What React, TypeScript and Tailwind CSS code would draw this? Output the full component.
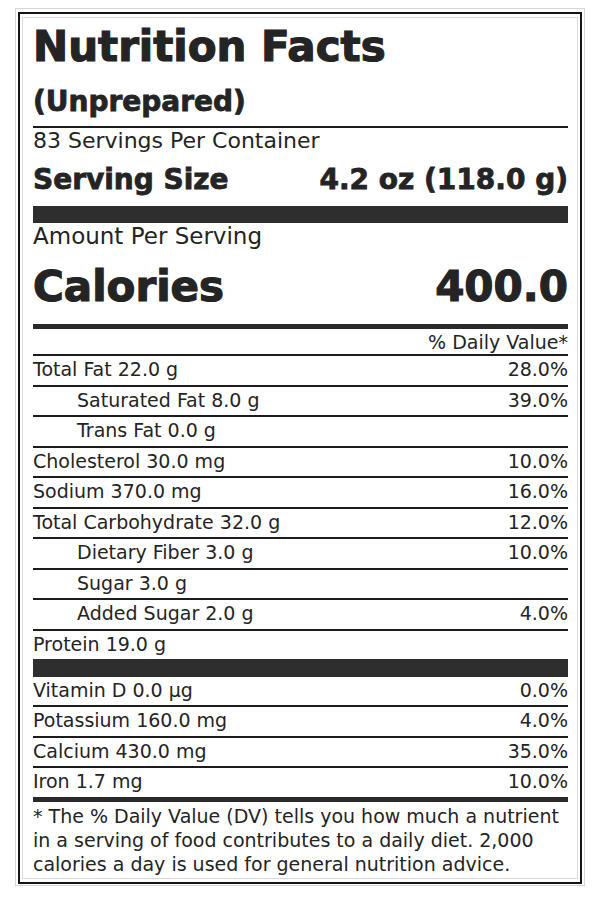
type Row = { label: string; dv?: string; indent?: boolean };

const nutrients: Row[] = [
  { label: 'Total Fat 22.0 g', dv: '28.0%' },
  { label: 'Saturated Fat 8.0 g', dv: '39.0%', indent: true },
  { label: 'Trans Fat 0.0 g', indent: true },
  { label: 'Cholesterol 30.0 mg', dv: '10.0%' },
  { label: 'Sodium 370.0 mg', dv: '16.0%' },
  { label: 'Total Carbohydrate 32.0 g', dv: '12.0%' },
  { label: 'Dietary Fiber 3.0 g', dv: '10.0%', indent: true },
  { label: 'Sugar 3.0 g', indent: true },
  { label: 'Added Sugar 2.0 g', dv: '4.0%', indent: true },
];

const vitamins: Row[] = [
  { label: 'Vitamin D 0.0 µg', dv: '0.0%' },
  { label: 'Potassium 160.0 mg', dv: '4.0%' },
  { label: 'Calcium 430.0 mg', dv: '35.0%' },
  { label: 'Iron 1.7 mg', dv: '10.0%' },
];

function NutrientRow({ row, border }: { row: Row; border: boolean }) {
  return (
    <div
      className={`flex justify-between h-[28.5px] box-content text-[19px] leading-[26px] ${
        border ? 'border-b-2 border-[#1c1c1c]' : ''
      }`}
    >
      <span className={row.indent ? 'pl-[44px]' : ''}>{row.label}</span>
      <span>{row.dv}</span>
    </div>
  );
}

export default function App() {
  return (
    <div className="min-h-[900px] bg-white pl-[15px] pt-[8px] font-['DejaVu_Sans',sans-serif] text-[#242424]">
      <div className="w-[570px] border border-[#d6d6d6] pt-[3px] pl-[2px] pr-[1px] pb-[1px]">
        <div className="w-[564px] border-2 border-[#141414]">
          <div className="mx-[2px] my-[3px] border border-[#d9d9d9] pl-[10px] pr-[9px]">
            <h1 className="pt-[6px] text-[42px] leading-[46px] font-bold [-webkit-text-stroke:1.2px_#242424]">
              Nutrition Facts
            </h1>
            <div className="mt-[15px] pb-[7px] border-b-2 border-[#1c1c1c] text-[28px] leading-[34px] font-bold [-webkit-text-stroke:0.8px_#242424]">
              (Unprepared)
            </div>
            <div className="text-[22px] leading-[26px]">83 Servings Per Container</div>
            <div className="mt-[9px] mb-[9px] flex justify-between text-[28px] leading-[34px] font-bold [-webkit-text-stroke:0.8px_#242424]">
              <span>Serving Size</span>
              <span>4.2 oz (118.0 g)</span>
            </div>
            <div className="h-[17px] bg-[#2e2e2e]" />
            <div className="text-[23px] leading-[27px]">Amount Per Serving</div>
            <div className="mt-[14px] mb-[14px] flex justify-between text-[42px] leading-[46px] font-bold [-webkit-text-stroke:1.2px_#242424]">
              <span>Calories</span>
              <span>400.0</span>
            </div>
            <div className="h-[5px] bg-[#2a2a2a]" />
            <div className="mt-[2px] border-b-2 border-[#1c1c1c] text-right text-[19px] leading-[23px]">
              % Daily Value*
            </div>
            {nutrients.map((row, i) => (
              <NutrientRow key={i} row={row} border />
            ))}
            <div className="h-[28px] text-[19px] leading-[26px]">Protein 19.0 g</div>
            <div className="h-[18px] bg-[#2e2e2e]" />
            {vitamins.map((row, i) => (
              <NutrientRow key={i} row={row} border={i < vitamins.length - 1} />
            ))}
            <div className="h-[5px] bg-[#2a2a2a]" />
            <p className="pt-[2.5px] pb-[2px] text-[19px] leading-[24px]">
              * The % Daily Value (DV) tells you how much a nutrient in a serving of food contributes to a
              daily diet. 2,000 calories a day is used for general nutrition advice.
            </p>
          </div>
        </div>
      </div>
    </div>
  );
}
